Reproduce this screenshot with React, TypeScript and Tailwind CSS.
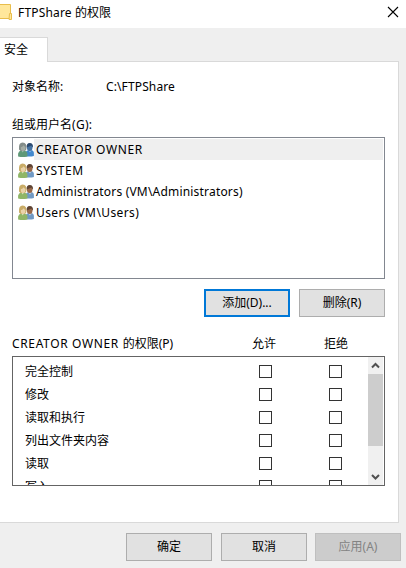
import React from "react";

const users = [
  { name: "CREATOR OWNER", tracking: "tracking-[0.64px]" },
  { name: "SYSTEM", tracking: "tracking-[0.6px]" },
  { name: "Administrators (VM\\Administrators)", tracking: "tracking-[0.19px]" },
  { name: "Users (VM\\Users)", tracking: "tracking-[0.4px]" },
];

const permissions = ["完全控制", "修改", "读取和执行", "列出文件夹内容", "读取", "写入"];

function UsersIcon({ muted }: { muted?: boolean }) {
  const hair = muted ? "#848d8a" : "#c9ac68";
  const face = muted ? "#a5ada5" : "#ead3aa";
  const shirt = muted ? "#5f9878" : "#8fb566";
  const backHair = muted ? "#2b4a70" : "#5d4232";
  const backFace = muted ? "#4573a3" : "#99694a";
  const backShirt = muted ? "#4288cd" : "#7099c4";
  return (
    <svg width="16" height="16" viewBox="0 0 16 16" className="shrink-0">
      <path d="M7.5 14.2V10.2Q8.4 8.2 11 8h1.6Q15.7 8.3 15.9 10.8v3.2Q12 15 7.5 14.2Z" fill={backShirt} />
      <path d="M10.4 8h3l-1.4 2.6Z" fill={muted ? "#9fc3e4" : "#d8e3ee"} />
      <ellipse cx="11.7" cy="5.4" rx="2.8" ry="3.5" fill={backFace} />
      <path d="M8.6 5.4Q8.2 1.1 11.8 1q3.6.1 3.1 4.6-1-.4-1.5-2-2 1.1-4.8 1.8Z" fill={backHair} />
      <path d="M.1 14.4v-3Q.5 8.8 3.4 8.4h2.2q3.4.3 3.8 3v3Q4.8 15.4.1 14.4Z" fill={shirt} />
      <path d="M3.1 8.2h3.1l-1.5 2.3Z" fill={muted ? "#9bbbaa" : "#d3dfbc"} />
      <path d="M1 7.4Q.3.6 4.7.6q4.5.1 3.7 6.6L7 8.9H2.5Z" fill={hair} />
      <ellipse cx="5.1" cy="6" rx="2.3" ry="3" fill={face} />
      <path d="M2.3 5.2q2.4-.2 3.3-2 .8 1.5 2.1 1.7L6.5 2H3.2Z" fill={hair} />
    </svg>
  );
}

function Button({ label, kind = "normal" }: { label: string; kind?: "normal" | "default" | "disabled" }) {
  const look = {
    normal: "border border-[#adadad] bg-[#e1e1e1]",
    default: "border-2 border-[#0078d7] bg-[#e1e1e1]",
    disabled: "border border-[#bfbfbf] bg-[#cccccc] text-[#838383]",
  }[kind];
  return (
    <button className={`flex h-7 w-[86px] items-center justify-center leading-4 ${look}`} disabled={kind === "disabled"}>
      {label}
    </button>
  );
}

function Box() {
  return <span className="block size-[13px] shrink-0 border border-[#333] bg-white" />;
}

export default function App() {
  return (
    <div className="flex h-[568px] w-[406px] flex-col overflow-hidden bg-[#efefef] font-['Noto_Sans','Noto_Sans_CJK_SC',sans-serif] text-[12px] leading-4 whitespace-nowrap text-black">
      <header className="flex h-7 shrink-0 items-start bg-white">
        <svg width="12" height="28" viewBox="0 0 12 28">
          <path d="M0 4.5h10.5v14H0" fill="#ffe79b" stroke="#e8bd4c" />
          <path d="M9.5 13.5h2v6H9z" fill="#ffe79b" stroke="#e8bd4c" />
        </svg>
        <h1 className="mt-[5px] ml-[6px]"><span className="tracking-[0.17px]">FTPShare </span>的权限</h1>
        <svg width="12" height="12" viewBox="0 0 12 12" className="mt-[6px] mr-[7px] ml-auto">
          <path d="M1 1l10 10M11 1L1 11" stroke="#000" strokeWidth="1.1" />
        </svg>
      </header>

      <div className="mt-[9px] flex h-[25px] shrink-0">
        <div className="z-10 -mb-px h-[25px] w-12 border-t border-r border-[#d9d9d9] bg-white pt-1 pl-1">安全</div>
      </div>
      <main className="-mt-px flex h-[462px] w-[399px] shrink-0 flex-col border-t border-r border-b border-[#d9d9d9] bg-white pr-[13px] pl-3">
        <div className="mt-[17px] flex">
          <span className="w-[94px]">对象名称:</span>
          <span className="tracking-[0.12px]">C:\FTPShare</span>
        </div>
        <div className="mt-[22px]">组或用户名<span className="tracking-[0.3px]">(G):</span></div>
        <ul className="mt-1 h-[142px] shrink-0 border border-[#828790] p-px">
          {users.map((u, i) => (
            <li key={u.name} className="flex h-[21px] items-center pl-1">
              <UsersIcon muted={i === 0} />
              <span className={`flex h-full flex-1 items-center pl-[2px] ${u.tracking} ${i === 0 ? "bg-[#efefef]" : ""}`}>{u.name}</span>
            </li>
          ))}
        </ul>
        <div className="mt-[10px] flex justify-end gap-[9px]">
          <Button label="添加(D)..." kind="default" />
          <Button label="删除(R)" />
        </div>
        <div className="mt-[19px] flex h-4">
          <span className="w-[240px]"><span className="tracking-[0.64px]">CREATOR OWNER </span>的权限(P)</span>
          <span className="w-[72px]">允许</span>
          <span>拒绝</span>
        </div>
        <section className="mt-1 flex h-[130px] shrink-0 overflow-hidden border border-[#646464] pr-px">
          <div className="flex-1 overflow-hidden pt-[3px]">
            {permissions.map((p) => (
              <div key={p} className="flex h-[23px] items-center pl-3">
                <span className="w-[234px]">{p}</span>
                <Box />
                <span className="w-[57px]" />
                <Box />
              </div>
            ))}
          </div>
          <div className="flex w-[15px] flex-col bg-[#f0f0f0]">
            <svg width="15" height="17" viewBox="0 0 15 17">
              <path d="M4 10.5L7.5 7l3.5 3.5" fill="none" stroke="#505050" strokeWidth="2" />
            </svg>
            <div className="h-[72px] bg-[#cdcdcd]" />
            <svg width="15" height="17" viewBox="0 0 15 17" className="mt-auto">
              <path d="M4 7l3.5 3.5L11 7" fill="none" stroke="#505050" strokeWidth="2" />
            </svg>
          </div>
        </section>
      </main>
      <footer className="mt-[10px] flex justify-end pr-[5px]">
        <div className="mr-[9px]"><Button label="确定" /></div>
        <div className="mr-2"><Button label="取消" /></div>
        <Button label="应用(A)" kind="disabled" />
      </footer>
    </div>
  );
}
